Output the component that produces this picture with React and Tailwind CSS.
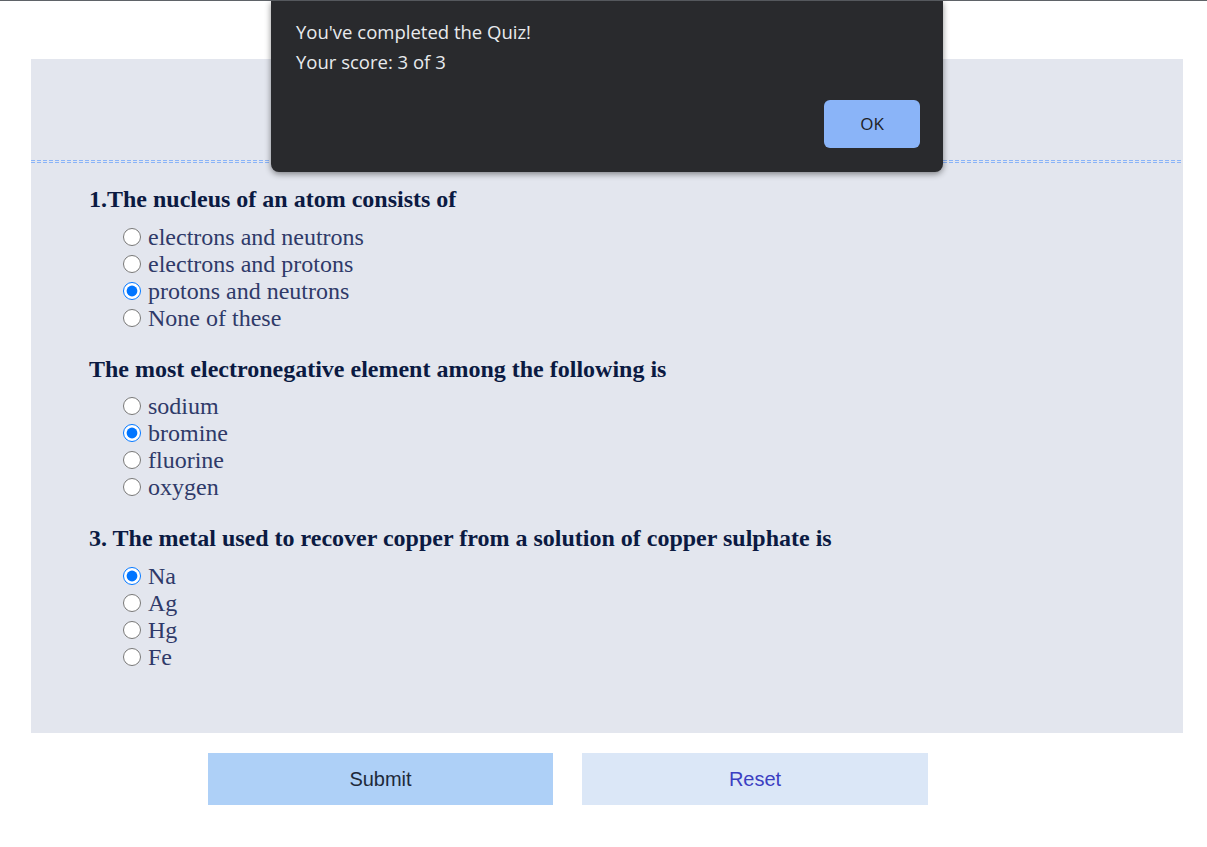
import { useState } from 'react';

const questions = [
  {
    name: 'q1',
    title: '1.The nucleus of an atom consists of',
    options: ['electrons and neutrons', 'electrons and protons', 'protons and neutrons', 'None of these'],
    picked: 2
  },
  {
    name: 'q2',
    title: 'The most electronegative element among the following is',
    options: ['sodium', 'bromine', 'fluorine', 'oxygen'],
    picked: 1
  },
  {
    name: 'q3',
    title: '3. The metal used to recover copper from a solution of copper sulphate is',
    options: ['Na', 'Ag', 'Hg', 'Fe'],
    picked: 0
  }
];

function Question({ q }) {
  return (
    <div>
      <h3 className="text-[24px] leading-[27px] font-bold text-[#0b1a42]">{q.title}</h3>
      <div className="mt-[10px] pl-[34px] flex flex-col">
        {q.options.map((opt, i) => (
          <label key={opt} className="flex items-center h-[27px] text-[24px] text-[#2f3a69]">
            <input
              type="radio"
              name={q.name}
              defaultChecked={i === q.picked}
              className="m-0 mr-[7px] w-[18px] h-[18px]"
            />
            {opt}
          </label>
        ))}
      </div>
    </div>
  );
}

export default function App() {
  const [open, setOpen] = useState(true);

  return (
    <div className="relative min-h-[847px] bg-white border-t border-[#5f6368] font-['Liberation_Serif',serif]">
      <div className="ml-[31px] mt-[58px] w-[1152px] bg-[#e3e6ee]">
        <div className="h-[101px]" />
        <div className="flex flex-col gap-px">
          <div className="h-px bg-[repeating-linear-gradient(90deg,#8ab4f8_0_4px,transparent_4px_6px)]" />
          <div className="h-px bg-[repeating-linear-gradient(90deg,#8ab4f8_0_4px,transparent_4px_6px)]" />
        </div>
        <div className="pl-[58px] pt-[23px] pb-[63px] flex flex-col gap-[24.5px]">
          {questions.map((q) => (
            <Question key={q.name} q={q} />
          ))}
        </div>
      </div>

      <div className="mt-[20px] flex gap-[29px] pl-[208px] font-['Liberation_Sans',Arial,sans-serif] text-[20px]">
        <button className="w-[345px] h-[52px] bg-[#aed0f7] text-[#1e2a3a]">Submit</button>
        <button className="w-[346px] h-[52px] bg-[#dbe7f7] text-[#3b3fc2]">Reset</button>
      </div>

      {open && (
        <div className="absolute left-[271px] top-0 w-[672px] h-[171px] bg-[#292a2d] rounded-b-lg shadow-[0_2px_6px_rgba(0,0,0,0.45)] px-[25px] font-['Open_Sans','Noto_Sans',sans-serif] text-[#e8eaed]">
          <div className="pt-[16px] text-[18.5px] leading-[30px]">
            <p>You've completed the Quiz!</p>
            <p>Your score: 3 of 3</p>
          </div>
          <div className="flex justify-end mt-[23px]">
            <button
              onClick={() => setOpen(false)}
              className="w-[96px] h-[48px] rounded-md bg-[#8ab4f8] text-[#202124] text-[17px] mr-[-2px]"
            >
              OK
            </button>
          </div>
        </div>
      )}
    </div>
  );
}
